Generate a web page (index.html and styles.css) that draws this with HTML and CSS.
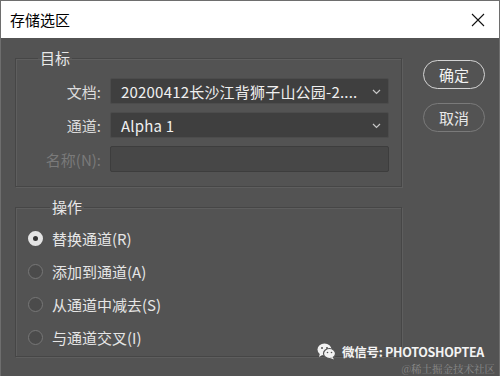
FILE: index.html
```html
<!DOCTYPE html>
<html lang="zh-CN">
<head>
    <meta charset="UTF-8">
    <title>存储选区</title>
    <link rel="stylesheet" href="styles.css">
</head>
<body>
    <div class="dialog">
        <!-- Barra del titolo -->
        <div class="titlebar">
            <span class="title">存储选区</span>
            <svg class="close" width="14" height="14" viewBox="0 0 14 14">
                <path d="M1 1 L13 13 M13 1 L1 13" stroke="#111" stroke-width="1.1" fill="none"/>
            </svg>
        </div>

        <div class="content">
            <div class="left">
                <!-- Gruppo destinazione -->
                <fieldset class="group target">
                    <legend>目标</legend>
                    <div class="row">
                        <label class="label">文档:</label>
                        <div class="select">
                            <span class="value">20200412长沙江背狮子山公园-2....</span>
                            <svg class="chev" width="9" height="6" viewBox="0 0 9 6"><path d="M1 1 L4.5 4.5 L8 1" stroke="#c8c8c8" stroke-width="1.2" fill="none"/></svg>
                        </div>
                    </div>
                    <div class="row">
                        <label class="label">通道:</label>
                        <div class="select">
                            <span class="value">Alpha 1</span>
                            <svg class="chev" width="9" height="6" viewBox="0 0 9 6"><path d="M1 1 L4.5 4.5 L8 1" stroke="#c8c8c8" stroke-width="1.2" fill="none"/></svg>
                        </div>
                    </div>
                    <div class="row">
                        <label class="label disabled">名称(N):</label>
                        <div class="input disabled"></div>
                    </div>
                </fieldset>

                <!-- Gruppo operazione -->
                <fieldset class="group operation">
                    <legend>操作</legend>
                    <div class="radio checked"><span class="dot"></span>替换通道(R)</div>
                    <div class="radio"><span class="dot"></span>添加到通道(A)</div>
                    <div class="radio"><span class="dot"></span>从通道中减去(S)</div>
                    <div class="radio"><span class="dot"></span>与通道交叉(I)</div>
                </fieldset>
            </div>

            <div class="buttons">
                <button class="btn primary">确定</button>
                <button class="btn">取消</button>
            </div>
        </div>

        <div class="watermark">
            <div class="wx">
                <svg width="19" height="17" viewBox="0 0 19 17">
                    <ellipse cx="7.5" cy="6.5" rx="7" ry="6" fill="#f2f2f2"/>
                    <path d="M3 10 L2 14 L6 11.5 Z" fill="#f2f2f2"/>
                    <ellipse cx="12.5" cy="10.5" rx="6" ry="5" fill="#f2f2f2" stroke="#535353" stroke-width="1.2"/>
                    <path d="M15.5 14 L17 16.5 L13 15 Z" fill="#f2f2f2"/>
                    <circle cx="5" cy="5" r="1" fill="#535353"/>
                    <circle cx="10" cy="5" r="1" fill="#535353"/>
                    <circle cx="10.5" cy="9.5" r="0.8" fill="#535353"/>
                    <circle cx="14.5" cy="9.5" r="0.8" fill="#535353"/>
                </svg>
                <span>微信号: PHOTOSHOPTEA</span>
            </div>
            <div class="juejin">@稀土掘金技术社区</div>
        </div>
    </div>
</body>
</html>
```

FILE: styles.css
```css
body {
    margin: 0;
    padding: 0;
    font-family: "Noto Sans", "Noto Sans CJK SC", sans-serif;
    background-color: #535353;
}
.dialog {
    position: relative;
    width: 500px;
    height: 376px;
    box-sizing: border-box;
    border: 1px solid #6e6e6e;
    border-bottom: none;
    background-color: #535353;
    overflow: hidden;
}
.titlebar {
    height: 37px;
    background-color: #fff;
    display: flex;
    align-items: center;
    justify-content: space-between;
    padding: 0 14px 0 9px;
}
.title {
    font-size: 15px;
    color: #000;
    font-family: "Noto Sans CJK SC", sans-serif;
}
.content {
    display: flex;
    padding: 10px 0 0 14px;
}
.left {
    width: 387px;
}
.group {
    margin: 0;
    border: 1px solid #464646;
    box-shadow: inset 1px 1px 0 #5e5e5e, 1px 1px 0 #5e5e5e;
    font-family: "Noto Sans CJK SC", sans-serif;
}
.group legend {
    margin-left: 22px;
    padding: 0 2px;
    font-size: 15px;
    line-height: 20px;
    color: #e8e8e8;
}
.target {
    padding: 10px 12px 14px 0;
}
.row {
    display: flex;
    align-items: center;
    height: 26px;
    margin-bottom: 8px;
}
.row:last-child {
    margin-bottom: 0;
}
.label {
    width: 85px;
    text-align: right;
    margin-right: 9px;
    font-size: 15px;
    color: #dcdcdc;
}
.label.disabled {
    color: #7a7a7a;
}
.select, .input {
    flex: 1;
    height: 26px;
    box-sizing: border-box;
    display: flex;
    align-items: center;
    justify-content: space-between;
    padding: 0 7px 0 10px;
    background-color: #3f3f3f;
    border: 1px solid #4c4c4c;
    border-radius: 2px;
}
.select .value {
    font-size: 15px;
    letter-spacing: 0.2px;
    color: #f0f0f0;
    white-space: nowrap;
}
.input.disabled {
    background-color: #474747;
    border-color: #3d3d3d;
}
.chev {
    margin-top: 2px;
}
.operation {
    margin-top: 10px;
    padding: 5px 0 2px 12px;
}
.radio {
    display: flex;
    align-items: center;
    height: 33px;
    font-size: 15px;
    color: #e6e6e6;
}
.dot {
    width: 15px;
    height: 15px;
    box-sizing: border-box;
    border-radius: 50%;
    border: 1px solid #777;
    background-color: #4b4b4b;
    margin-right: 9px;
}
.radio.checked .dot {
    border: 5px solid #e4e4e4;
    background-color: #333;
}
.buttons {
    display: flex;
    flex-direction: column;
    margin-left: 21px;
    margin-top: 12px;
}
.btn {
    width: 62px;
    height: 29px;
    margin-bottom: 14px;
    border: 1.5px solid #7a7a7a;
    border-radius: 15px;
    background-color: transparent;
    color: #e8e8e8;
    font-family: "Noto Sans CJK SC", sans-serif;
    font-size: 15px;
    padding: 0;
}
.btn.primary {
    border-color: #d4d4d4;
    color: #f2f2f2;
}
.watermark {
    position: absolute;
    right: 4px;
    bottom: 0;
    display: flex;
    flex-direction: column;
    align-items: flex-end;
}
.wx {
    display: flex;
    align-items: center;
    gap: 6px;
    margin-right: 11px;
    font-family: "Noto Sans CJK SC", sans-serif;
    font-size: 12.5px;
    font-weight: 600;
    letter-spacing: -0.3px;
    color: #f4f4f4;
}
.juejin {
    font-family: "Noto Serif CJK SC", "Noto Sans CJK SC", serif;
    font-size: 10.5px;
    color: #8a8a8a;
    line-height: 15px;
}
```
